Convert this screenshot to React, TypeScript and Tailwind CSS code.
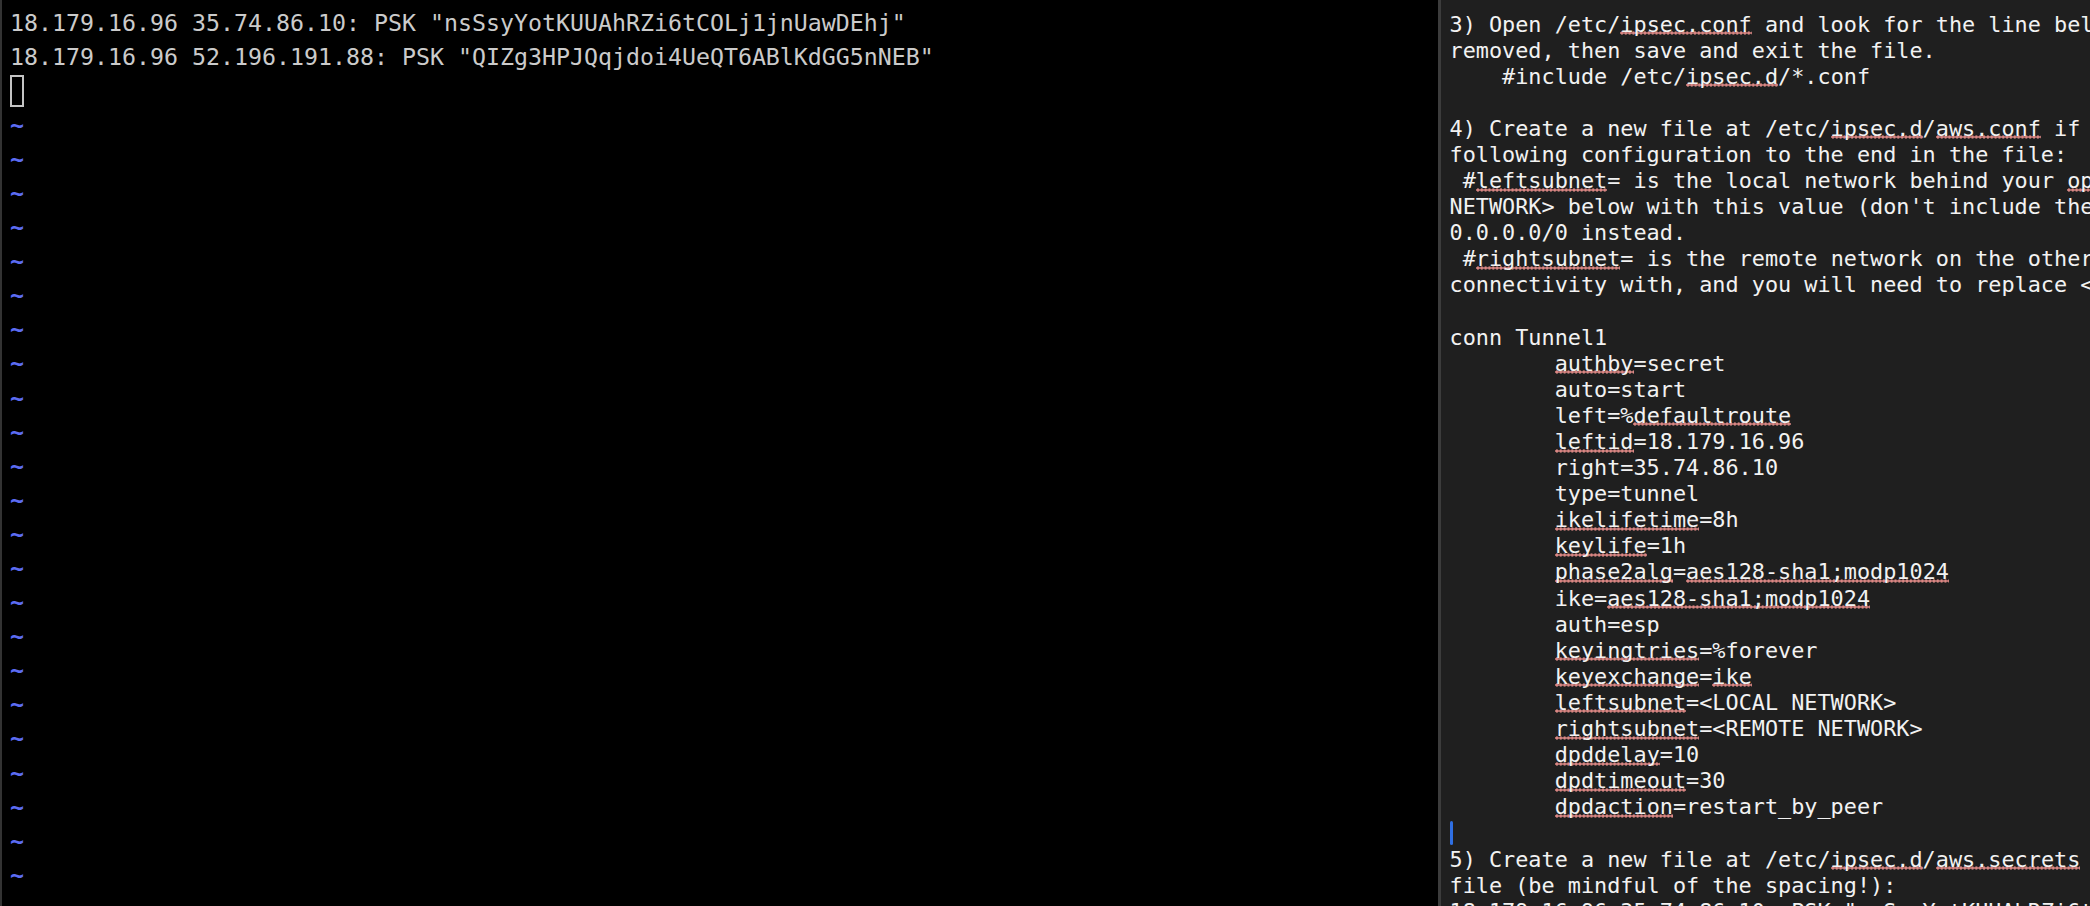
import { ReactNode } from 'react';

const vimLines = [
  '18.179.16.96 35.74.86.10: PSK "nsSsyYotKUUAhRZi6tCOLj1jnUawDEhj"',
  '18.179.16.96 52.196.191.88: PSK "QIZg3HPJQqjdoi4UeQT6ABlKdGG5nNEB"',
];

// words wrapped in ~ get the spell-check dots
const noteLines = [
  '3) Open /etc/~ipsec.conf~ and look for the line below. Ensure that the # in front of the line has been',
  'removed, then save and exit the file.',
  '    #include /etc/~ipsec.d~/*.conf',
  '',
  "4) Create a new file at /etc/~ipsec.d~/~aws.conf~ if doesn't already exist, and then open it. Append the",
  'following configuration to the end in the file:',
  ' #~leftsubnet~= is the local network behind your ~openswan~ server, and you will need to replace the <LOCAL',
  "NETWORK> below with this value (don't include the brackets). If you have multiple subnets, you can use",
  '0.0.0.0/0 instead.',
  ' #~rightsubnet~= is the remote network on the other side of your VPN tunnel that you wish to have',
  'connectivity with, and you will need to replace <REMOTE NETWORK> with this value.',
  '',
  'conn Tunnel1',
  '        ~authby~=secret',
  '        auto=start',
  '        left=%~defaultroute~',
  '        ~leftid~=18.179.16.96',
  '        right=35.74.86.10',
  '        type=tunnel',
  '        ~ikelifetime~=8h',
  '        ~keylife~=1h',
  '        ~phase2alg~=~aes128-sha1;modp1024~',
  '        ike=~aes128-sha1;modp1024~',
  '        auth=esp',
  '        ~keyingtries~=%forever',
  '        ~keyexchange~=~ike~',
  '        ~leftsubnet~=<LOCAL NETWORK>',
  '        ~rightsubnet~=<REMOTE NETWORK>',
  '        ~dpddelay~=10',
  '        ~dpdtimeout~=30',
  '        ~dpdaction~=restart_by_peer',
  '|',
  "5) Create a new file at /etc/~ipsec.d~/~aws.secrets~ if it doesn't already exist, and append this line to the",
  'file (be mindful of the spacing!):',
  '18.179.16.96 35.74.86.10: PSK "~nsSsyYotKUUAhRZi6tCOLj1jnUawDEhj~"',
];

function Spelled({ children }: { children: ReactNode }) {
  return (
    <span className="bg-[radial-gradient(circle,#db8784_1.45px,transparent_1.75px)] bg-[length:3.85px_4px] bg-repeat-x bg-[position:0_calc(100%-1.5px)]">
      {children}
    </span>
  );
}

function NoteLine({ text }: { text: string }) {
  if (text === '|') {
    return (
      <div className="h-[26.1px] flex items-center">
        <span className="w-[3px] h-[24px] rounded-full bg-[#2f6fe3]" />
      </div>
    );
  }
  let parts = text.split('~');
  return (
    <div className="h-[26.1px] whitespace-pre">
      {parts.map((p, i) => (i % 2 ? <Spelled key={i}>{p}</Spelled> : <span key={i}>{p}</span>))}
      {text === '' && ' '}
    </div>
  );
}

export default function App() {
  let tildes = Array.from({ length: 24 });

  return (
    <div className="flex w-[2090px] h-[906px] overflow-hidden bg-black">
      <div className="w-[1438px] shrink-0 h-full border-l-2 border-[#333333] bg-black pl-[8px] pt-[5.5px] overflow-hidden font-['DejaVu_Sans_Mono',monospace] text-[23.25px] leading-[34.1px] text-[#cbcbcb]">
        {vimLines.map((l) => (
          <div key={l} className="whitespace-pre">
            {l}
          </div>
        ))}
        <div className="h-[34.1px] flex items-center">
          <span className="w-[14px] h-[32px] border-2 border-[#c4c4c4]" />
        </div>
        {tildes.map((_, i) => (
          <div key={i} className="font-bold text-[#5c6cf2]">
            ~
          </div>
        ))}
      </div>

      <div className="w-[3px] shrink-0 h-full bg-[#3c3c3c]" />

      <div className="flex-1 h-full bg-[#1f1f1f] pl-[8.5px] pt-[11.5px] overflow-hidden font-['DejaVu_Sans_Mono',monospace] text-[21.84px] leading-[26.1px] text-[#f2f2f2]">
        {noteLines.map((l, i) => (
          <NoteLine key={i} text={l} />
        ))}
      </div>
    </div>
  );
}
